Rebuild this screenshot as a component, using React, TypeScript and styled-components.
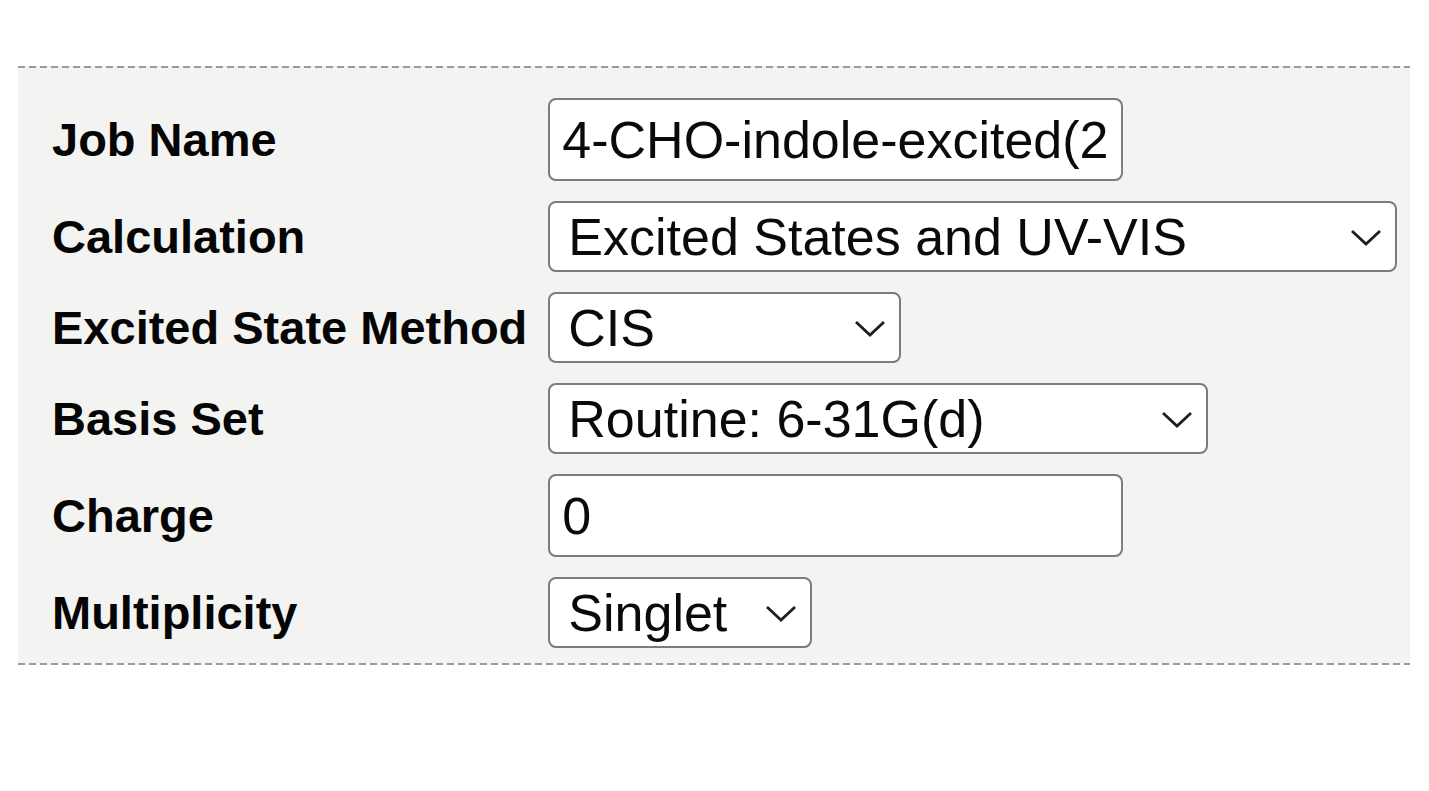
import React from "react";
import styled, { createGlobalStyle } from "styled-components";

const GlobalStyle = createGlobalStyle`
  html, body {
    margin: 0;
    padding: 0;
    background: #ffffff;
  }
`;

const Page = styled.div`
  padding: 66px 19px 0 18px;
  font-family: "Liberation Sans", Arial, sans-serif;
`;

// dashed rules top and bottom, drawn as gradients for a 7px dash / 4px gap
const Panel = styled.div`
  background-color: #f3f3f2;
  background-image: repeating-linear-gradient(90deg, #9c9c9c 0 7px, transparent 7px 11px),
    repeating-linear-gradient(90deg, #9c9c9c 0 7px, transparent 7px 11px);
  background-size: 100% 2px, 100% 2px;
  background-position: left top, left bottom;
  background-repeat: no-repeat;
  padding: 32px 0 17px 34px;
  display: grid;
  grid-template-columns: max-content 1fr;
  column-gap: 21px;
  row-gap: 20px;
  align-items: center;
`;

const Label = styled.label`
  font-size: 47px;
  font-weight: 700;
  color: #050505;
  white-space: nowrap;
`;

const TextInput = styled.input<{ $w: number }>`
  box-sizing: border-box;
  width: ${(p) => p.$w}px;
  height: 83px;
  padding: 0 12px;
  font-family: "Liberation Sans", Arial, sans-serif;
  font-size: 52px;
  color: #0a0a0a;
  background: #fff;
  border: 2.5px solid #7c7c7c;
  border-radius: 8px;
  outline: none;
`;

const SelectWrap = styled.div<{ $w: number }>`
  position: relative;
  width: ${(p) => p.$w}px;
  height: 71px;
`;

const Select = styled.select`
  box-sizing: border-box;
  width: 100%;
  height: 100%;
  appearance: none;
  -webkit-appearance: none;
  padding: 0 60px 0 18px;
  font-family: "Liberation Sans", Arial, sans-serif;
  font-size: 52px;
  color: #0a0a0a;
  background: #fff;
  border: 2.5px solid #7c7c7c;
  border-radius: 8px;
  outline: none;
`;

const Chevron = styled.svg`
  position: absolute;
  right: 15px;
  top: 50%;
  width: 32px;
  height: 18px;
  margin-top: -8px;
  pointer-events: none;
`;

const Field = ({ w, value }: { w: number; value: string }) => (
  <SelectWrap $w={w}>
    <Select defaultValue={value}>
      <option>{value}</option>
    </Select>
    <Chevron viewBox="0 0 32 18">
      <path d="M2 2 L16 15 L30 2" fill="none" stroke="#1e1e1e" strokeWidth="2.8" />
    </Chevron>
  </SelectWrap>
);

const App = () => {
  return (
    <Page>
      <GlobalStyle />
      <Panel>
        <Label>Job Name</Label>
        <TextInput $w={575} defaultValue="4-CHO-indole-excited(2)" />

        <Label>Calculation</Label>
        <Field w={849} value="Excited States and UV-VIS" />

        <Label>Excited State Method</Label>
        <Field w={353} value="CIS" />

        <Label>Basis Set</Label>
        <Field w={660} value="Routine: 6-31G(d)" />

        <Label>Charge</Label>
        <TextInput $w={575} defaultValue="0" />

        <Label>Multiplicity</Label>
        <Field w={264} value="Singlet" />
      </Panel>
    </Page>
  );
};

export default App;
